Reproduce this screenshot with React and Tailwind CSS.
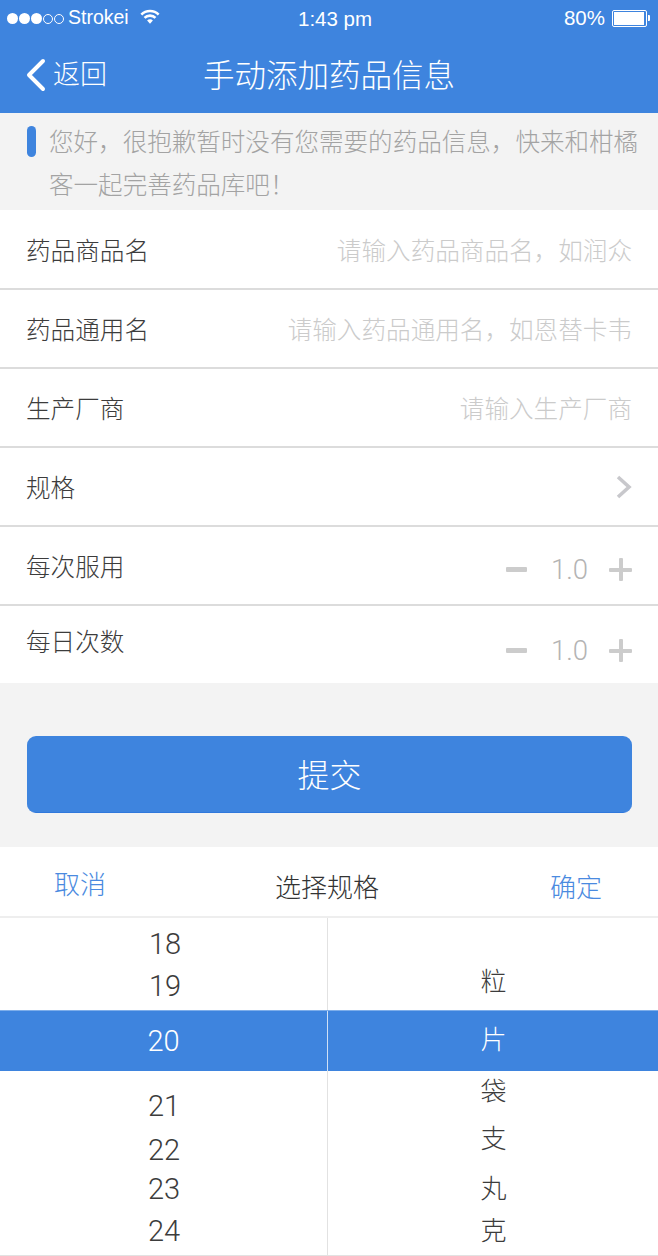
const cjk = "font-['Roboto','Noto_Sans_CJK_SC',sans-serif] font-light";

function Row({ label, placeholder, children, height = "h-[79px]" }) {
  return (
    <div className={"flex items-center justify-between pl-[27px] pr-[26px] border-b-2 border-[#dcdcdc] bg-white " + height}>
      <span className="text-[24.6px] text-[#3c3c3c] pt-[6px] -ml-[1px]">{label}</span>
      {placeholder && <span className="text-[24.6px] text-[#cbcbcb] pt-[6px]">{placeholder}</span>}
      {children}
    </div>
  );
}

function Stepper({ className = "" }) {
  return (
    <div className={"flex items-center " + className}>
      <div className="w-[21px] h-[5px] bg-[#cccccc] rounded-[1px]"></div>
      <span className="ml-[24px] w-[37px] text-[27.5px] text-[#b4b4b4]">1.0</span>
      <div className="ml-[21px] w-[23px] h-[23px] relative">
        <div className="absolute left-0 top-[10px] w-[23px] h-[4px] bg-[#cccccc] rounded-[1px]"></div>
        <div className="absolute left-[10px] top-0 w-[4px] h-[23px] bg-[#cccccc] rounded-[1px]"></div>
      </div>
    </div>
  );
}

function PickerCol({ items, className = "" }) {
  return (
    <div className={"flex flex-col items-center " + className}>
      {items.map((it) => (
        <div key={it.t} className={"h-[40px] leading-[40px] text-[#3c3c3c] " + it.c}>
          {it.t}
        </div>
      ))}
    </div>
  );
}

export default function App() {
  return (
    <div className={"w-[658px] h-[1256px] overflow-hidden bg-[#f3f3f3] " + cjk}>
      <div className="bg-[#3e84de] h-[113px] text-white">
        <div className="h-[36px] flex items-center justify-between pl-[7px] pr-[8px] font-['Liberation_Sans',sans-serif] font-normal text-[19.5px] relative">
          <div className="flex items-center">
            <div className="flex gap-[1px]">
              <span className="w-[11px] h-[11px] rounded-full bg-white"></span>
              <span className="w-[11px] h-[11px] rounded-full bg-white"></span>
              <span className="w-[11px] h-[11px] rounded-full bg-white"></span>
              <span className="w-[10px] h-[10px] mt-[1px] rounded-full border border-white"></span>
              <span className="w-[10px] h-[10px] mt-[1px] rounded-full border border-white"></span>
            </div>
            <span className="ml-[4px]">Strokei</span>
            <svg className="ml-[11px] mb-[3px]" width="20" height="17" viewBox="0 0 22 17" fill="none" stroke="white" strokeWidth="2.8">
              <path d="M1.5 6.5 C6.5 1 15.5 1 20.5 6.5" />
              <path d="M5 10 C8 6.7 14 6.7 17 10" />
              <path d="M7.8 13 C9.6 11 12.4 11 14.2 13 L11 16.5 Z" fill="white" stroke="none" />
            </svg>
          </div>
          <span className="absolute left-[298px] top-[4px] text-[20.5px]">1:43 pm</span>
          <div className="flex items-center">
            <span className="text-[20.5px]">80%</span>
            <div className="ml-[7px] w-[35px] h-[17px] border border-white rounded-[2px] p-[1px] flex">
              <div className="w-[30px] bg-white"></div>
            </div>
            <div className="ml-[1px] w-[2px] h-[6px] bg-white rounded-r-[1px]"></div>
          </div>
        </div>
        <div className="h-[77px] flex items-center relative">
          <svg className="ml-[25px]" width="22" height="34" viewBox="0 0 22 34" fill="none" stroke="white" strokeWidth="4" strokeLinecap="round" strokeLinejoin="round">
            <path d="M18 3 L4 17 L18 31" />
          </svg>
          <span className="ml-[6px] text-[27px] pt-[1px]">返回</span>
          <span className="absolute left-[203px] top-[19px] text-[31.5px] leading-[44px]">手动添加药品信息</span>
        </div>
      </div>

      <div className="h-[97px] pl-[27px] flex">
        <div className="mt-[13px] w-[9px] h-[31px] rounded-full bg-[#3e84de]"></div>
        <p className="ml-[13px] w-[600px] text-[24.55px] leading-[43px] text-[#a3a3a3] pt-[8px]">
          您好，很抱歉暂时没有您需要的药品信息，快来和柑橘客一起完善药品库吧！
        </p>
      </div>

      <Row height="h-[80px]" label="药品商品名" placeholder="请输入药品商品名，如润众" />
      <Row label="药品通用名" placeholder="请输入药品通用名，如恩替卡韦" />
      <Row label="生产厂商" placeholder="请输入生产厂商" />
      <Row label="规格">
        <svg className="mt-[1px]" width="16" height="24" viewBox="0 0 16 24" fill="none" stroke="#c8c8cc" strokeWidth="3.6">
          <path d="M2 2 L13 12 L2 22" />
        </svg>
      </Row>
      <Row label="每次服用">
        <Stepper className="pt-[8px]" />
      </Row>
      <div className="h-[77px] flex justify-between pl-[26px] pr-[26px] bg-white">
        <span className="text-[24.6px] text-[#3c3c3c] leading-[34px] pt-[20px]">每日次数</span>
        <Stepper className="pt-[12px]" />
      </div>

      <div className="h-[164px] pt-[53px] pl-[27px] pr-[26px]">
        <button className="w-full h-[77px] rounded-[9px] bg-[#3e84de] border-b border-[#2f78dc] text-white text-[32px] pt-[3px]">
          提交
        </button>
      </div>

      <div className="bg-white h-[409px]">
        <div className="h-[71px] flex items-center justify-between pl-[54px] pr-[56px] border-b-2 border-[#eeeeee] text-[26px]">
          <span className="text-[#4a8ae0] pt-[8px]">取消</span>
          <span className="text-[#333333] pt-[13px] -ml-[2px]">选择规格</span>
          <span className="text-[#4a8ae0] pt-[13px]">确定</span>
        </div>
        <div className="flex h-[92px] text-[29px]">
          <PickerCol
            className="w-[328px] border-r border-[#e2e2e2]"
            items={[
              { t: "18", c: "mt-[6px] pl-[3px]" },
              { t: "19", c: "mt-[2px] pl-[3px]" },
            ]}
          />
          <PickerCol className="flex-1 pl-[1px]" items={[{ t: "粒", c: "mt-[44px] text-[26px]" }]} />
        </div>
        <div className="flex h-[61px] bg-[#3e84de] text-white border-t border-[#7eaeea]">
          <div className="w-[328px] flex justify-center items-center border-r border-[#cfe0f6] text-[29px] pt-[1px]">20</div>
          <div className="flex-1 flex justify-center items-center text-[26px] pb-[2px] pl-[1px]">片</div>
        </div>
        <div className="flex h-[185px] text-[29px] border-b border-[#e2e2e2]">
          <PickerCol
            className="w-[328px] border-r border-[#e2e2e2]"
            items={[
              { t: "21", c: "mt-[15px] pl-[1px]" },
              { t: "22", c: "mt-[4px] pl-[1px]" },
              { t: "23", c: "mt-[-1px] pl-[1px]" },
              { t: "24", c: "mt-[2px] pl-[1px]" },
            ]}
          />
          <PickerCol
            className="flex-1 pl-[1px]"
            items={[
              { t: "袋", c: "mt-[1px] text-[26px]" },
              { t: "支", c: "mt-[7px] text-[26px]" },
              { t: "丸", c: "mt-[10px] text-[26px]" },
              { t: "克", c: "mt-[2px] text-[26px]" },
            ]}
          />
        </div>
      </div>
    </div>
  );
}
